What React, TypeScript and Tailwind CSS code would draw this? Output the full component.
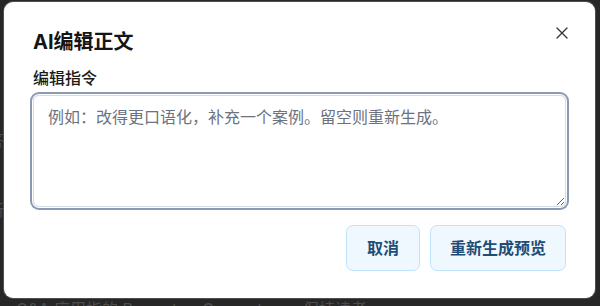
import React from "react";

export default function App() {
  const font = { fontFamily: "Inter, 'Noto Sans CJK SC', sans-serif" };
  return (
    <div className="relative w-[600px] h-[306px] overflow-hidden bg-[#272727]" style={font}>
      {/* background page under overlay */}
      <div className="flex flex-col gap-[46px] pt-[128px] text-[16px] leading-[24px] text-[#4d4d4d]">
        <div className="-ml-[12px]">答</div>
        <div className="-ml-[12px]">新</div>
        <div className="pl-[16px] pt-[29px] whitespace-nowrap">Q&amp;A 应用指的 Prompt 　 Generator 　 保持读者</div>
      </div>

      {/* modal */}
      <div className="absolute left-[4px] top-[2px] w-[591px] h-[296px] rounded-[9px] bg-white shadow-[0_0_0_1px_rgba(120,120,120,0.5)] flex flex-col px-[29px] pt-[26px] pb-[27px]">
        <div className="flex items-center justify-between">
          <h2 className="text-[20px] leading-[28px] font-bold text-[#151515]">AI编辑正文</h2>
          <button className="w-[20px] h-[20px] flex items-center justify-center -mr-[6px] -mt-[18px] text-[#333]">
            <svg width="12" height="12" viewBox="0 0 12 12" fill="none" stroke="currentColor" strokeWidth="1.3" strokeLinecap="round">
              <path d="M1 1L11 11M11 1L1 11" />
            </svg>
          </button>
        </div>
        <label className="mt-[10px] text-[16px] leading-[24px] font-medium text-[#1a1a1a]">编辑指令</label>
        <textarea
          className="mt-[5px] h-[112px] w-full resize-y rounded-[6px] border border-[#d3dce8] px-[14px] pt-[9px] text-[16px] leading-[24px] text-[#222] placeholder:text-[#6b7280] outline-none ring-2 ring-[#8a9ab3] ring-offset-1"
          placeholder="例如：改得更口语化，补充一个案例。留空则重新生成。"
          autoFocus
        />
        <div className="mt-[18px] flex justify-end gap-[10px]">
          <button className="rounded-[7px] border border-[#bfe3fb] bg-[#f0f8ff] px-[20px] py-[10px] text-[16px] leading-[24px] font-semibold text-[#1e4d78]">
            取消
          </button>
          <button className="rounded-[7px] border border-[#bfe3fb] bg-[#f0f8ff] px-[19px] py-[10px] text-[16px] leading-[24px] font-semibold text-[#1e4d78]">
            重新生成预览
          </button>
        </div>
      </div>
    </div>
  );
}
